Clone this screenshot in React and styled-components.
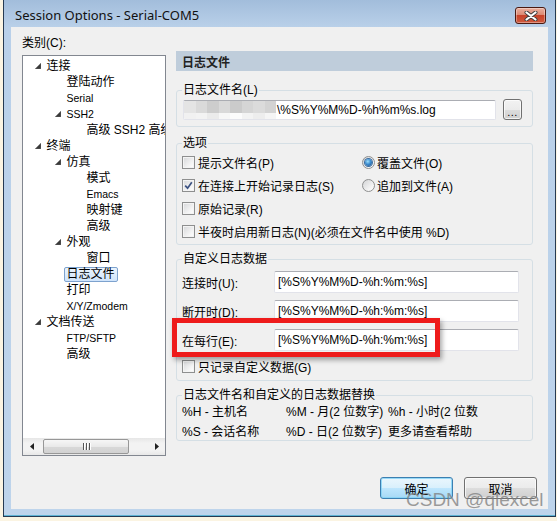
import React from 'react';
import styled, { createGlobalStyle } from 'styled-components';

const GlobalStyle = createGlobalStyle`
  html, body { margin: 0; padding: 0; background: #fbf4e2; }
  body {
    font-family: "Liberation Sans", "Noto Sans CJK SC", sans-serif;
    font-size: 12px;
    color: #000;
  }
  * { box-sizing: border-box; }
`;

const Page = styled.div`
  width: 557px;
  height: 521px;
  overflow: hidden;
`;

const Window = styled.div`
  margin-left: 3px;
  width: 553px;
  height: 517px;
  border: 1px solid #263a52;
  border-top: none;
  background: linear-gradient(#a2bddb 0px, #b9d0e9 27px, #bed4eb 100%);
  box-shadow: inset 0 -1px 0 #5fb3d3;
  padding: 0 7px 7px;
  display: flex;
  flex-direction: column;
`;

const TitleBar = styled.div`
  height: 27px;
  display: flex;
  align-items: flex-start;
  justify-content: space-between;
`;

const TitleText = styled.div`
  font-family: "Noto Sans", "Liberation Sans", sans-serif;
  font-size: 13px;
  line-height: 16px;
  padding: 7px 0 0 4px;
  color: #111;
`;

const CloseButton = styled.div`
  width: 31px;
  height: 17px;
  margin: 7px 2px 0 0;
  border: 1px solid #4a1a12;
  border-radius: 3px;
  background: linear-gradient(#eab0a0 0%, #dc8a74 45%, #c8432a 50%, #cf5a3e 100%);
  box-shadow: inset 0 0 0 1px rgba(255, 255, 255, 0.35);
  display: flex;
  align-items: center;
  justify-content: center;
`;

const Client = styled.div`
  position: relative;
  flex: 1;
  background: #f0f0f0;
  padding: 8px 11px 10px;
  display: flex;
  flex-direction: column;
`;

const Body = styled.div`
  display: flex;
  gap: 10px;
`;

const LeftCol = styled.div`
  width: 144px;
  display: flex;
  flex-direction: column;
`;

const FieldLabel = styled.div`
  line-height: 16px;
  height: 16px;
  margin-bottom: 4px;
`;

const TreeBox = styled.div`
  height: 401px;
  border: 1px solid #828790;
  background: #fff;
  display: flex;
  flex-direction: column;
`;

const TreeList = styled.ul`
  flex: 1;
  margin: 0;
  padding: 2px 0 0;
  list-style: none;
  overflow: hidden;
`;

const TreeRow = styled.li`
  height: 16px;
  display: flex;
  align-items: center;
  white-space: nowrap;
  padding-left: ${p => 9.5 + p.$level * 20}px;
`;

const Twisty = styled.span`
  width: 14px;
  flex: none;
  display: flex;
  align-items: center;
  padding-left: 2px;
`;

const TreeLabel = styled.span`
  font-size: ${p => (p.$latin ? '10.5px' : '12px')};
  line-height: 14px;
  height: 15px;
  display: inline-flex;
  align-items: center;
  padding: 0 2px;
  margin-left: -3px;
  border: 1px solid ${p => (p.$selected ? '#7da2ce' : 'transparent')};
  border-radius: 2px;
  background: ${p => (p.$selected ? 'linear-gradient(#ebf4fd, #cfe4fb)' : 'transparent')};
`;

const HScroll = styled.div`
  height: 17px;
  flex: none;
  display: flex;
  align-items: center;
  background: linear-gradient(#e6e6e6, #f3f3f3 30%, #f3f3f3 70%, #e8e8e8);
`;

const ScrollArrow = styled.div`
  width: 17px;
  height: 17px;
  flex: none;
  display: flex;
  align-items: center;
  justify-content: center;
`;

const ScrollTrack = styled.div`
  flex: 1;
  height: 17px;
  display: flex;
  align-items: center;
`;

const ScrollThumb = styled.div`
  width: 86px;
  height: 15px;
  margin-left: 3px;
  border: 1px solid #979797;
  border-radius: 2px;
  background: linear-gradient(#f6f6f6, #e9e9e9 50%, #d8d8d8 51%, #d2d2d2);
  display: flex;
  align-items: center;
  justify-content: center;
  gap: 2px;
`;

const Grip = styled.span`
  width: 1px;
  height: 7px;
  background: #555;
  box-shadow: 1px 0 0 #fff;
`;

const RightCol = styled.div`
  width: 357px;
  margin-top: 16px;
  display: flex;
  flex-direction: column;
`;

const Header = styled.div`
  height: 20px;
  background: #bfcddb;
  font-weight: bold;
  color: #222;
  padding-left: 6px;
  display: flex;
  align-items: center;
`;

const GroupBox = styled.fieldset`
  margin: ${p => p.$mt}px 0 0;
  padding: ${p => p.$pad};
  border: 1px solid #d5dfe5;
  border-radius: 3px;
  min-width: 0;
`;

const Legend = styled.legend`
  padding: 0 1px;
  margin: 0;
  line-height: 16px;
`;

const FileRow = styled.div`
  height: 21px;
  margin-top: 1px;
  display: flex;
  align-items: center;
  gap: 7px;
`;

const TextBox = styled.div`
  height: ${p => p.$h || 22}px;
  width: ${p => p.$w}px;
  margin-left: ${p => p.$ml || 0}px;
  background: #fff;
  border: 1px solid #e2e3ea;
  border-top-color: #abadb3;
  border-radius: 2px;
  padding-left: ${p => p.$pl ?? 3}px;
  display: flex;
  align-items: center;
  white-space: nowrap;
  overflow: hidden;
`;

const Mosaic = styled.span`
  display: inline-grid;
  grid-template-columns: repeat(8, 11.5px);
  grid-template-rows: 13px 6px;
  flex: none;
  margin-right: 1px;
`;

const MosaicCell = styled.span`
  background: ${p => p.$c};
`;

const SmallButton = styled.div`
  width: 19px;
  height: 21px;
  border: 1px solid #707070;
  border-radius: 3px;
  background: linear-gradient(#f2f2f2, #ebebeb 50%, #dddddd 51%, #cfcfcf);
  box-shadow: inset 0 0 0 1px rgba(255, 255, 255, 0.7);
  display: flex;
  align-items: flex-end;
  justify-content: center;
  font-size: 11px;
  line-height: 14px;
  letter-spacing: 0.5px;
`;

const OptionGrid = styled.div`
  display: grid;
  grid-template-columns: 180px 1fr;
  grid-auto-rows: 23px;
`;

const OptionItem = styled.label`
  display: flex;
  align-items: center;
  gap: ${p => (p.$radio ? 2 : 3)}px;
  white-space: nowrap;
  grid-column: ${p => (p.$span ? '1 / -1' : 'auto')};
`;

const CheckBox = styled.span`
  width: 13px;
  height: 13px;
  flex: none;
  border: 1px solid #8e8f8f;
  background: linear-gradient(135deg, #d6d7d9, #f6f6f6 70%, #ffffff);
  box-shadow: inset 0 0 0 1px #f4f4f4;
  display: flex;
  align-items: center;
  justify-content: center;
`;

const Radio = styled.span`
  width: 13px;
  height: 13px;
  flex: none;
  border: 1px solid #8e8f8f;
  border-radius: 50%;
  background: linear-gradient(135deg, #d3d4d6, #f4f4f4 70%, #ffffff);
  display: flex;
  align-items: center;
  justify-content: center;
`;

const RadioDot = styled.span`
  width: 7px;
  height: 7px;
  border-radius: 50%;
  background: radial-gradient(circle at 40% 35%, #9fe0fb 0%, #3d8dd0 45%, #17487f 100%);
  box-shadow: 0 0 0 1px #3a6ca0;
`;

const LogGrid = styled.div`
  display: grid;
  grid-template-columns: 92px 245px;
  grid-auto-rows: 22px;
  row-gap: 7px;
  align-items: center;
`;

const CheckRow = styled.div`
  height: 22px;
  margin-top: 4px;
  display: flex;
`;

const HelpGrid = styled.div`
  margin-top: -3px;
  display: grid;
  grid-template-columns: 104px 102px 1fr;
  grid-auto-rows: 20px;
  align-items: center;
  white-space: nowrap;
`;

const Footer = styled.div`
  margin-top: 21px;
  display: flex;
  justify-content: flex-end;
  gap: 11px;
`;

const DialogButton = styled.div`
  width: 73px;
  height: 22px;
  border: 1px solid ${p => (p.$default ? '#3c7fb1' : '#707070')};
  border-radius: 3px;
  background: ${p =>
    p.$default
      ? 'linear-gradient(#eaf6fd, #d9f0fc 50%, #bee6fd 51%, #a7d9f5)'
      : 'linear-gradient(#f2f2f2, #ebebeb 50%, #dddddd 51%, #cfcfcf)'};
  box-shadow: inset 0 0 0 1px ${p => (p.$default ? 'rgba(130, 210, 245, 0.8)' : 'rgba(255, 255, 255, 0.7)')};
  display: flex;
  align-items: center;
  justify-content: center;
`;

const Annotation = styled.div`
  position: absolute;
  left: 161px;
  top: 291px;
  width: 268px;
  height: 39px;
  border: 5px solid #ee1b1b;
  box-shadow: 2px 3px 5px rgba(0, 0, 0, 0.35);
  pointer-events: none;
`;

const Watermark = styled.div`
  position: absolute;
  left: 395px;
  top: 463px;
  font-family: "Liberation Sans", sans-serif;
  font-size: 19px;
  line-height: 19px;
  color: rgba(125, 125, 125, 0.75);
  white-space: nowrap;
  pointer-events: none;
`;

const Expander = () => (
  <svg width="6" height="6" viewBox="0 0 6 6">
    <polygon points="6,0 6,6 0,6" fill="#3a3a3a" stroke="#7a7a7a" strokeWidth="0.5" />
  </svg>
);

const CheckMark = () => (
  <svg width="9" height="9" viewBox="0 0 9 9">
    <path d="M1.2 4.6 L3.6 7.2 L7.8 1.2" fill="none" stroke="#3c5282" strokeWidth="1.7" />
  </svg>
);

const treeItems = [
  { level: 0, label: '连接', open: true },
  { level: 1, label: '登陆动作' },
  { level: 1, label: 'Serial', latin: true },
  { level: 1, label: 'SSH2', open: true, latin: true },
  { level: 2, label: '高级 SSH2 高级' },
  { level: 0, label: '终端', open: true },
  { level: 1, label: '仿真', open: true },
  { level: 2, label: '模式' },
  { level: 2, label: 'Emacs', latin: true },
  { level: 2, label: '映射键' },
  { level: 2, label: '高级' },
  { level: 1, label: '外观', open: true },
  { level: 2, label: '窗口' },
  { level: 1, label: '日志文件', selected: true },
  { level: 1, label: '打印' },
  { level: 1, label: 'X/Y/Zmodem', latin: true },
  { level: 0, label: '文档传送', open: true },
  { level: 1, label: 'FTP/SFTP', latin: true },
  { level: 1, label: '高级' },
];

const mosaicColors = [
  '#e4e4e4', '#dadada', '#cdcdcd', '#d9d9d9', '#cbcbcb', '#d5d5d5', '#dbdbdb', '#d3d3d3',
  '#f1f1f1', '#f3f3f3', '#ebebeb', '#f7f7f7', '#fcfcfc', '#f3f3f3', '#ededed', '#f5f5f5',
];

const logRows = [
  ['连接时(U):', '[%S%Y%M%D-%h:%m:%s]'],
  ['断开时(D):', '[%S%Y%M%D-%h:%m:%s]'],
  ['在每行(E):', '[%S%Y%M%D-%h:%m:%s]'],
];

const helpCells = [
  '%H - 主机名', '%M - 月(2 位数字)', '%h - 小时(2 位数',
  '%S - 会话名称', '%D - 日(2 位数字)', '更多请查看帮助',
];

export default function App() {
  return (
    <Page>
      <GlobalStyle />
      <Window>
        <TitleBar>
          <TitleText>Session Options - Serial-COM5</TitleText>
          <CloseButton>
            <svg width="14" height="10" viewBox="0 0 14 10">
              <path d="M2.5 1.5 L11.5 8.5 M11.5 1.5 L2.5 8.5" stroke="#3d3d3d" strokeWidth="4" strokeLinecap="round" />
              <path d="M2.5 1.5 L11.5 8.5 M11.5 1.5 L2.5 8.5" stroke="#ffffff" strokeWidth="2.2" strokeLinecap="round" />
            </svg>
          </CloseButton>
        </TitleBar>
        <Client>
          <Body>
            <LeftCol>
              <FieldLabel>类别(C):</FieldLabel>
              <TreeBox>
                <TreeList>
                  {treeItems.map((it, i) => (
                    <TreeRow key={i} $level={it.level}>
                      <Twisty>{it.open && <Expander />}</Twisty>
                      <TreeLabel $latin={it.latin} $selected={it.selected}>{it.label}</TreeLabel>
                    </TreeRow>
                  ))}
                </TreeList>
                <HScroll>
                  <ScrollArrow>
                    <svg width="4" height="7" viewBox="0 0 4 7"><polygon points="4,0 4,7 0,3.5" fill="#222" /></svg>
                  </ScrollArrow>
                  <ScrollTrack>
                    <ScrollThumb>
                      <Grip /><Grip /><Grip />
                    </ScrollThumb>
                  </ScrollTrack>
                  <ScrollArrow>
                    <svg width="4" height="7" viewBox="0 0 4 7"><polygon points="0,0 0,7 4,3.5" fill="#222" /></svg>
                  </ScrollArrow>
                </HScroll>
              </TreeBox>
            </LeftCol>

            <RightCol>
              <Header>日志文件</Header>

              <GroupBox $mt={11} $pad="0 9px 6px 5px">
                <Legend>日志文件名(L)</Legend>
                <FileRow>
                  <TextBox $w={313} $h={20} $ml={1} $pl={0}>
                    <Mosaic>
                      {mosaicColors.map((c, i) => <MosaicCell key={i} $c={c} />)}
                    </Mosaic>
                    \%S%Y%M%D-%h%m%s.log
                  </TextBox>
                  <SmallButton>...</SmallButton>
                </FileRow>
              </GroupBox>

              <GroupBox $mt={8} $pad="0 9px 1px 5px">
                <Legend>选项</Legend>
                <OptionGrid>
                  <OptionItem><CheckBox />提示文件名(P)</OptionItem>
                  <OptionItem $radio><Radio><RadioDot /></Radio>覆盖文件(O)</OptionItem>
                  <OptionItem><CheckBox><CheckMark /></CheckBox>在连接上开始记录日志(S)</OptionItem>
                  <OptionItem $radio><Radio />追加到文件(A)</OptionItem>
                  <OptionItem $span><CheckBox />原始记录(R)</OptionItem>
                  <OptionItem $span><CheckBox />半夜时启用新日志(N)(必须在文件名中使用 %D)</OptionItem>
                </OptionGrid>
              </GroupBox>

              <GroupBox $mt={6} $pad="4px 12px 3px 5px">
                <Legend>自定义日志数据</Legend>
                <LogGrid>
                  {logRows.map(([label, value]) => (
                    <React.Fragment key={label}>
                      <span>{label}</span>
                      <TextBox $w={245}>{value}</TextBox>
                    </React.Fragment>
                  ))}
                </LogGrid>
                <CheckRow>
                  <OptionItem><CheckBox />只记录自定义数据(G)</OptionItem>
                </CheckRow>
              </GroupBox>

              <GroupBox $mt={6} $pad="0 9px 0 5px">
                <Legend>日志文件名和自定义的日志数据替换</Legend>
                <HelpGrid>
                  {helpCells.map(t => <span key={t}>{t}</span>)}
                </HelpGrid>
              </GroupBox>
            </RightCol>
          </Body>

          <Footer>
            <DialogButton $default>确定</DialogButton>
            <DialogButton>取消</DialogButton>
          </Footer>

          <Annotation />
          <Watermark>CSDN @qlexcel</Watermark>
        </Client>
      </Window>
    </Page>
  );
}
